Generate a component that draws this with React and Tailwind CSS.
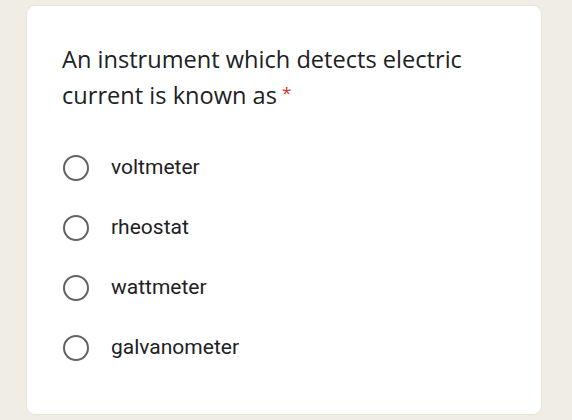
const options = ["voltmeter", "rheostat", "wattmeter", "galvanometer"];

export default function App() {
	return (
		<div className="w-[572px] h-[420px] bg-[#f0ede4] pt-[5px] pl-[26px] overflow-hidden">
			<div className="w-[516px] h-[410px] bg-white rounded-[9px] border border-[#e6e3da] pl-[35px] pt-[35px]">
				<h1
					className="text-[23.6px] leading-[36px] text-[#202124] w-[440px]"
					style={{ fontFamily: "'Open Sans', Roboto, sans-serif" }}
				>
					An instrument which detects electric
					<br />
					current is known as
					<span className="relative -top-[5px] text-[#d93025] ml-[5px] text-[17px]">*</span>
				</h1>
				<div className="mt-[37px] flex flex-col gap-[30px]" style={{ fontFamily: "Roboto, sans-serif" }}>
					{options.map((o) => (
						<label key={o} className="flex items-center h-[30px]">
							<span className="w-[26px] h-[26px] rounded-full border-2 border-[#5f6368] ml-[1px]" />
							<span className="ml-[22px] text-[21px] text-[#202124]">{o}</span>
						</label>
					))}
				</div>
			</div>
		</div>
	);
}
